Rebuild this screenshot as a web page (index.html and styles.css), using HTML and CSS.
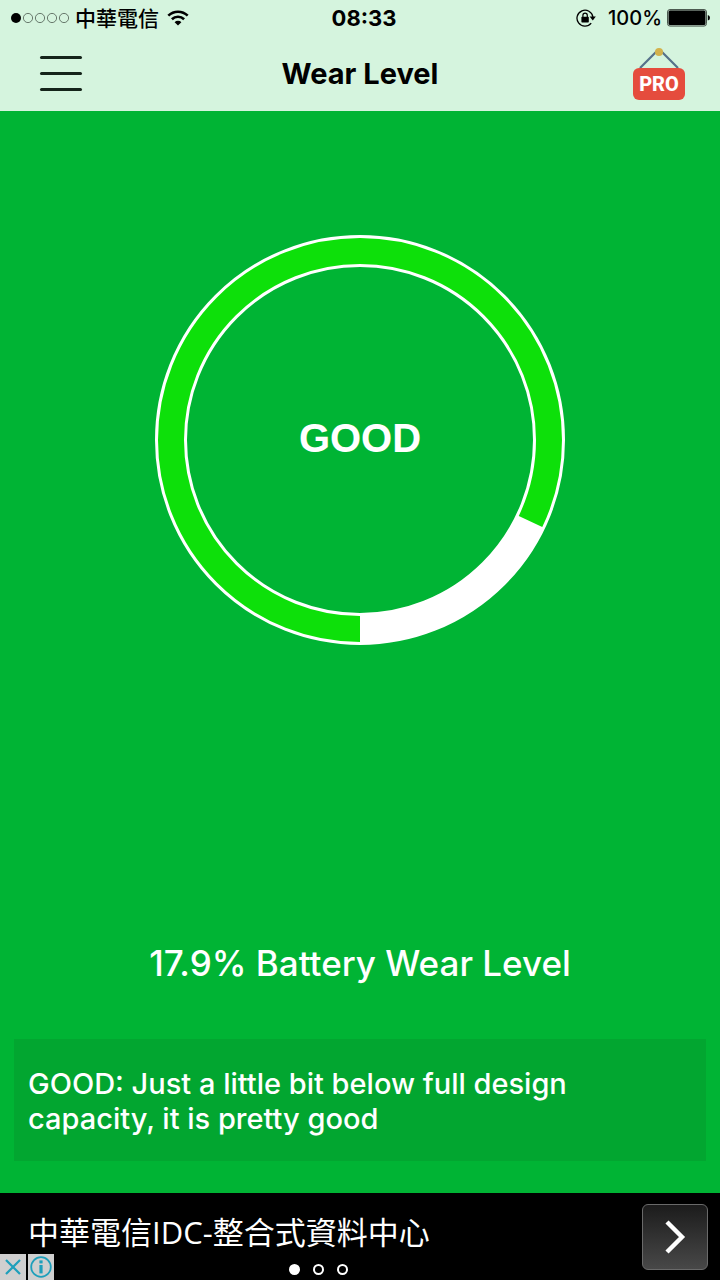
FILE: index.html
```
<!DOCTYPE html>
<html lang="en">
<head>
    <meta charset="UTF-8">
    <meta name="viewport" content="width=device-width, initial-scale=1.0">
    <title>Wear Level</title>
    <link rel="stylesheet" href="styles.css">
</head>
<body>

    <header class="header">
        <div class="status">
            <div class="status-left">
                <svg class="signal" width="60" height="12" viewBox="0 0 60 12">
                    <circle cx="6" cy="6" r="5"/>
                    <g fill="none" stroke="#4c5a50" stroke-width="0.8">
                        <circle cx="18" cy="6" r="4.6"/>
                        <circle cx="30" cy="6" r="4.6"/>
                        <circle cx="42" cy="6" r="4.6"/>
                        <circle cx="54" cy="6" r="4.6"/>
                    </g>
                </svg>
                <span class="carrier" lang="zh-TW">中華電信</span>
                <svg width="22" height="16" viewBox="0 0 22 16" fill="none" stroke="#000" stroke-width="2.6">
                    <path d="M1.3 5.6 A14 14 0 0 1 20.7 5.6"/>
                    <path d="M4.9 9.2 A8.7 8.7 0 0 1 17.1 9.2"/>
                    <path d="M11 15.6 L7.6 12.2 A4.8 4.8 0 0 1 14.4 12.2 Z" fill="#000" stroke="none"/>
                </svg>
            </div>
            <span class="time">08:33</span>
            <div class="status-right">
                <svg width="20" height="18" viewBox="0 0 20 18">
                    <path d="M15.2 14.2 A8 8 0 1 1 16.9 8" fill="none" stroke="#000" stroke-width="1.3"/>
                    <path d="M13.6 7.6 H19.8 L16.8 11.4 Z"/>
                    <rect x="5.4" y="7.8" width="7.4" height="5.6" rx="0.6"/>
                    <path d="M6.9 8 V6.4 A2.2 2.2 0 0 1 11.3 6.4 V8" fill="none" stroke="#000" stroke-width="1.2"/>
                </svg>
                <span class="percent">100%</span>
                <svg width="43" height="18" viewBox="0 0 43 18">
                    <rect x="0.5" y="0.5" width="39" height="16.6" rx="2.5" fill="#b3c7b9" stroke="#4c5a50"/>
                    <rect x="1.6" y="1.6" width="36.8" height="14.4" rx="1.5"/>
                    <path d="M40.8 6 Q43 6.4 43 8.8 Q43 11.2 40.8 11.6 Z"/>
                </svg>
            </div>
        </div>

        <nav class="navbar">
            <button class="menu-btn" aria-label="Menu">
                <span></span>
                <span></span>
                <span></span>
            </button>
            <h1>Wear Level</h1>
            <button class="pro-btn">
                <svg width="40" height="20" viewBox="0 0 40 20">
                    <path d="M1 20 L18 3 M22 3 L39 20" fill="none" stroke="#56718a" stroke-width="2.2"/>
                    <circle cx="20" cy="4" r="4" fill="#d3b24c"/>
                </svg>
                <span class="pro-label">PRO</span>
            </button>
        </nav>
    </header>

    <main class="main">
        <div class="gauge">
            <svg viewBox="0 0 410 410">
                <circle class="gauge-track" cx="205" cy="205" r="189"/>
                <circle class="gauge-value" cx="205" cy="205" r="189" pathLength="100" stroke-dasharray="82.1 100" transform="rotate(90 205 205)"/>
            </svg>
            <strong class="gauge-label">GOOD</strong>
        </div>
        <h2>17.9% Battery Wear Level</h2>
        <p class="info">GOOD: Just a little bit below full design capacity, it is pretty good</p>
    </main>

    <footer class="ad">
        <div class="ad-content">
            <a href="#" class="ad-title" lang="zh-TW">中華電信IDC-整合式資料中心</a>
            <div class="dots">
                <button class="dot active" aria-label="1"></button>
                <button class="dot" aria-label="2"></button>
                <button class="dot" aria-label="3"></button>
            </div>
        </div>
        <button class="ad-next" aria-label="Next">
            <svg width="22" height="36" viewBox="0 0 22 36">
                <path d="M3 3 L18 18 L3 33" fill="none" stroke="#fff" stroke-width="4.4"/>
            </svg>
        </button>
        <div class="ad-choices">
            <button aria-label="Close">
                <svg width="26" height="26" viewBox="0 0 26 26">
                    <path d="M6 6 L20 20 M20 6 L6 20" fill="none" stroke="#1d9fbb" stroke-width="2.2"/>
                </svg>
            </button>
            <button aria-label="Ad info">
                <svg width="26" height="26" viewBox="0 0 26 26">
                    <circle cx="13" cy="13" r="9.8" fill="none" stroke="#1d9fbb" stroke-width="1.8"/>
                    <rect x="11.4" y="6.4" width="3.2" height="3"/>
                    <rect x="11.4" y="11" width="3.2" height="8.4"/>
                </svg>
            </button>
        </div>
    </footer>

</body>
</html>
```

FILE: styles.css
```
* {
    box-sizing: border-box;
}

body {
    margin: 0;
    min-height: 100vh;
    display: flex;
    flex-direction: column;
    font-family: Inter, "Noto Sans CJK TC", sans-serif;
    background-color: #00b434;
    color: white;
}

button {
    padding: 0;
    border: none;
    background: none;
    font-family: inherit;
    cursor: pointer;
}

svg {
    display: block;
}

/* Header */
.header {
    background-color: #d5f4de;
    color: black;
}

.status {
    display: grid;
    grid-template-columns: 1fr auto 1fr;
    align-items: center;
    height: 36px;
    padding: 0 10px;
    font-size: 20px;
}

.status-left,
.status-right {
    display: flex;
    align-items: center;
}

.status-right {
    justify-content: flex-end;
}

.carrier {
    margin: 0 8px 0 5px;
    padding-bottom: 2px;
    font-family: "Noto Sans CJK TC", sans-serif;
    font-size: 21px;
    font-weight: 500;
    line-height: 34px;
}

.time {
    margin-left: 8px;
    font-size: 22px;
    font-weight: 700;
}

.percent {
    margin: 0 5px 0 12px;
    font-weight: 500;
}

.navbar {
    display: grid;
    grid-template-columns: 1fr auto 1fr;
    align-items: center;
    height: 75px;
    padding: 0 35px;
}

.menu-btn {
    display: flex;
    flex-direction: column;
    gap: 13px;
    width: 42px;
    margin-left: 5px;
}

.menu-btn span {
    height: 3px;
    border-radius: 2px;
    background-color: #15241a;
}

h1 {
    margin: 0;
    font-size: 29px;
    font-weight: 700;
}

.pro-btn {
    justify-self: end;
    display: flex;
    flex-direction: column;
    align-items: center;
}

.pro-label {
    width: 52px;
    border-radius: 6px;
    background-color: #e54c3d;
    color: white;
    font-family: Roboto, sans-serif;
    font-size: 20px;
    font-weight: 800;
    line-height: 32px;
}

/* Battery wear */
.main {
    flex: 1;
    display: flex;
    flex-direction: column;
    padding: 124px 14px 32px;
}

.gauge {
    display: grid;
    place-items: center;
    width: 100%;
    max-width: 410px;
    margin: 0 auto;
}

.gauge svg,
.gauge-label {
    grid-area: 1 / 1;
}

.gauge svg {
    width: 100%;
}

.gauge circle {
    fill: none;
}

.gauge-track {
    stroke: white;
    stroke-width: 32;
}

.gauge-value {
    stroke: #0de00a;
    stroke-width: 26;
}

.gauge-label {
    padding-bottom: 4px;
    font-family: "Liberation Sans", sans-serif;
    font-size: 40px;
}

h2 {
    margin: auto 0 52px;
    font-size: 35px;
    font-weight: 500;
    line-height: 48px;
    text-align: center;
}

.info {
    margin: 0;
    padding: 27px 14px 25px;
    background-color: #02a630;
    font-size: 29px;
    font-weight: 500;
    line-height: 35px;
}

/* Ad banner */
.ad {
    position: relative;
    display: grid;
    grid-template-columns: 1fr 66px;
    gap: 6px;
    align-items: center;
    height: 87px;
    padding-right: 12px;
    background-color: black;
}

.ad-content {
    display: flex;
    flex-direction: column;
    align-self: end;
    gap: 12px;
    padding-bottom: 5px;
}

.ad-title {
    padding-left: 28px;
    color: white;
    font-family: "Open Sans", "Noto Sans CJK TC", sans-serif;
    font-size: 31px;
    font-weight: 400;
    line-height: 40px;
    text-decoration: none;
}

.dots {
    display: flex;
    justify-content: center;
    gap: 13px;
}

.dot {
    width: 11px;
    height: 11px;
    border: 2px solid white;
    border-radius: 50%;
}

.dot.active {
    background-color: white;
}

.ad-next {
    display: grid;
    place-items: center;
    height: 66px;
    border: 1px solid #6a6a6a;
    border-radius: 6px;
    background: linear-gradient(#1c1c1c, #484848);
}

.ad-choices {
    position: absolute;
    left: 0;
    bottom: 0;
    display: flex;
    gap: 2px;
}

.ad-choices button {
    background-color: #cfcfcf;
    fill: #1d9fbb;
}
```
